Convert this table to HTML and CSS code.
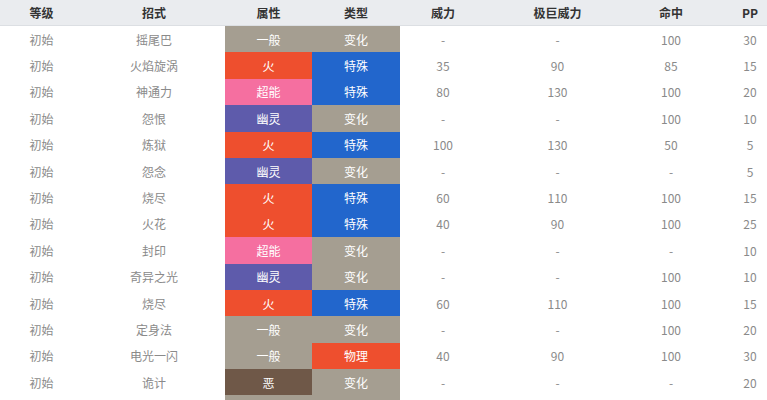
FILE: index.html
```html
<!DOCTYPE html>
<html lang="zh-CN">
<head>
<meta charset="utf-8">
<title>招式表</title>
<link rel="stylesheet" href="styles.css">
</head>
<body>
<div class="wrap">
<table class="moves">
<colgroup>
<col class="c-lv"><col class="c-name"><col class="c-type"><col class="c-cat"><col class="c-pow"><col class="c-max"><col class="c-acc"><col class="c-pp">
</colgroup>
<thead>
<tr><th>等级</th><th>招式</th><th>属性</th><th>类型</th><th>威力</th><th>极巨威力</th><th>命中</th><th>PP</th></tr>
</thead>
<tbody>
<tr><td>初始</td><td>摇尾巴</td><td class="t normal">一般</td><td class="t status">变化</td><td>-</td><td>-</td><td>100</td><td>30</td></tr>
<tr><td>初始</td><td>火焰旋涡</td><td class="t fire">火</td><td class="t special">特殊</td><td>35</td><td>90</td><td>85</td><td>15</td></tr>
<tr><td>初始</td><td>神通力</td><td class="t psychic">超能</td><td class="t special">特殊</td><td>80</td><td>130</td><td>100</td><td>20</td></tr>
<tr><td>初始</td><td>怨恨</td><td class="t ghost">幽灵</td><td class="t status">变化</td><td>-</td><td>-</td><td>100</td><td>10</td></tr>
<tr><td>初始</td><td>炼狱</td><td class="t fire">火</td><td class="t special">特殊</td><td>100</td><td>130</td><td>50</td><td>5</td></tr>
<tr><td>初始</td><td>怨念</td><td class="t ghost">幽灵</td><td class="t status">变化</td><td>-</td><td>-</td><td>-</td><td>5</td></tr>
<tr><td>初始</td><td>烧尽</td><td class="t fire">火</td><td class="t special">特殊</td><td>60</td><td>110</td><td>100</td><td>15</td></tr>
<tr><td>初始</td><td>火花</td><td class="t fire">火</td><td class="t special">特殊</td><td>40</td><td>90</td><td>100</td><td>25</td></tr>
<tr><td>初始</td><td>封印</td><td class="t psychic">超能</td><td class="t status">变化</td><td>-</td><td>-</td><td>-</td><td>10</td></tr>
<tr><td>初始</td><td>奇异之光</td><td class="t ghost">幽灵</td><td class="t status">变化</td><td>-</td><td>-</td><td>100</td><td>10</td></tr>
<tr><td>初始</td><td>烧尽</td><td class="t fire">火</td><td class="t special">特殊</td><td>60</td><td>110</td><td>100</td><td>15</td></tr>
<tr><td>初始</td><td>定身法</td><td class="t normal">一般</td><td class="t status">变化</td><td>-</td><td>-</td><td>100</td><td>20</td></tr>
<tr><td>初始</td><td>电光一闪</td><td class="t normal">一般</td><td class="t physical">物理</td><td>40</td><td>90</td><td>100</td><td>30</td></tr>
<tr><td>初始</td><td>诡计</td><td class="t dark">恶</td><td class="t status">变化</td><td>-</td><td>-</td><td>-</td><td>20</td></tr>
<tr><td></td><td></td><td class="t normal"></td><td class="t status"></td><td></td><td></td><td></td><td></td></tr>
</tbody>
</table>
</div>
</body>
</html>
```
FILE: styles.css
```css
html, body {
  margin: 0;
  padding: 0;
  overflow: hidden;
  background: #fff;
}
.wrap {
  width: 767px;
  height: 400px;
  overflow: hidden;
}
.moves {
  width: 787px;
  table-layout: fixed;
  border-collapse: collapse;
  font-family: "Noto Sans CJK SC", "Noto Sans", "Liberation Sans", sans-serif;
  font-size: 12px;
}
.c-lv { width: 83px; }
.c-name { width: 142px; }
.c-type { width: 87px; }
.c-cat { width: 88px; }
.c-pow { width: 86px; }
.c-max { width: 143px; }
.c-acc { width: 84px; }
.c-pp { width: 74px; }
.moves th {
  height: 25px;
  padding: 0;
  background: #eaecef;
  border-bottom: 1px solid #dcdfe3;
  color: #333;
  font-weight: bold;
  text-align: center;
  vertical-align: middle;
}
.moves td {
  height: 26.4px;
  padding: 0;
  color: #8a8a8a;
  text-align: center;
  vertical-align: middle;
}
.moves td.t { color: #fff; }
.normal, .status { background: #a59e91; }
.fire, .physical { background: #ee4f2e; }
.special { background: #2266cc; }
.psychic { background: #f56fa0; }
.ghost { background: #5e5bab; }
.dark { background: #6f5848; }
```
